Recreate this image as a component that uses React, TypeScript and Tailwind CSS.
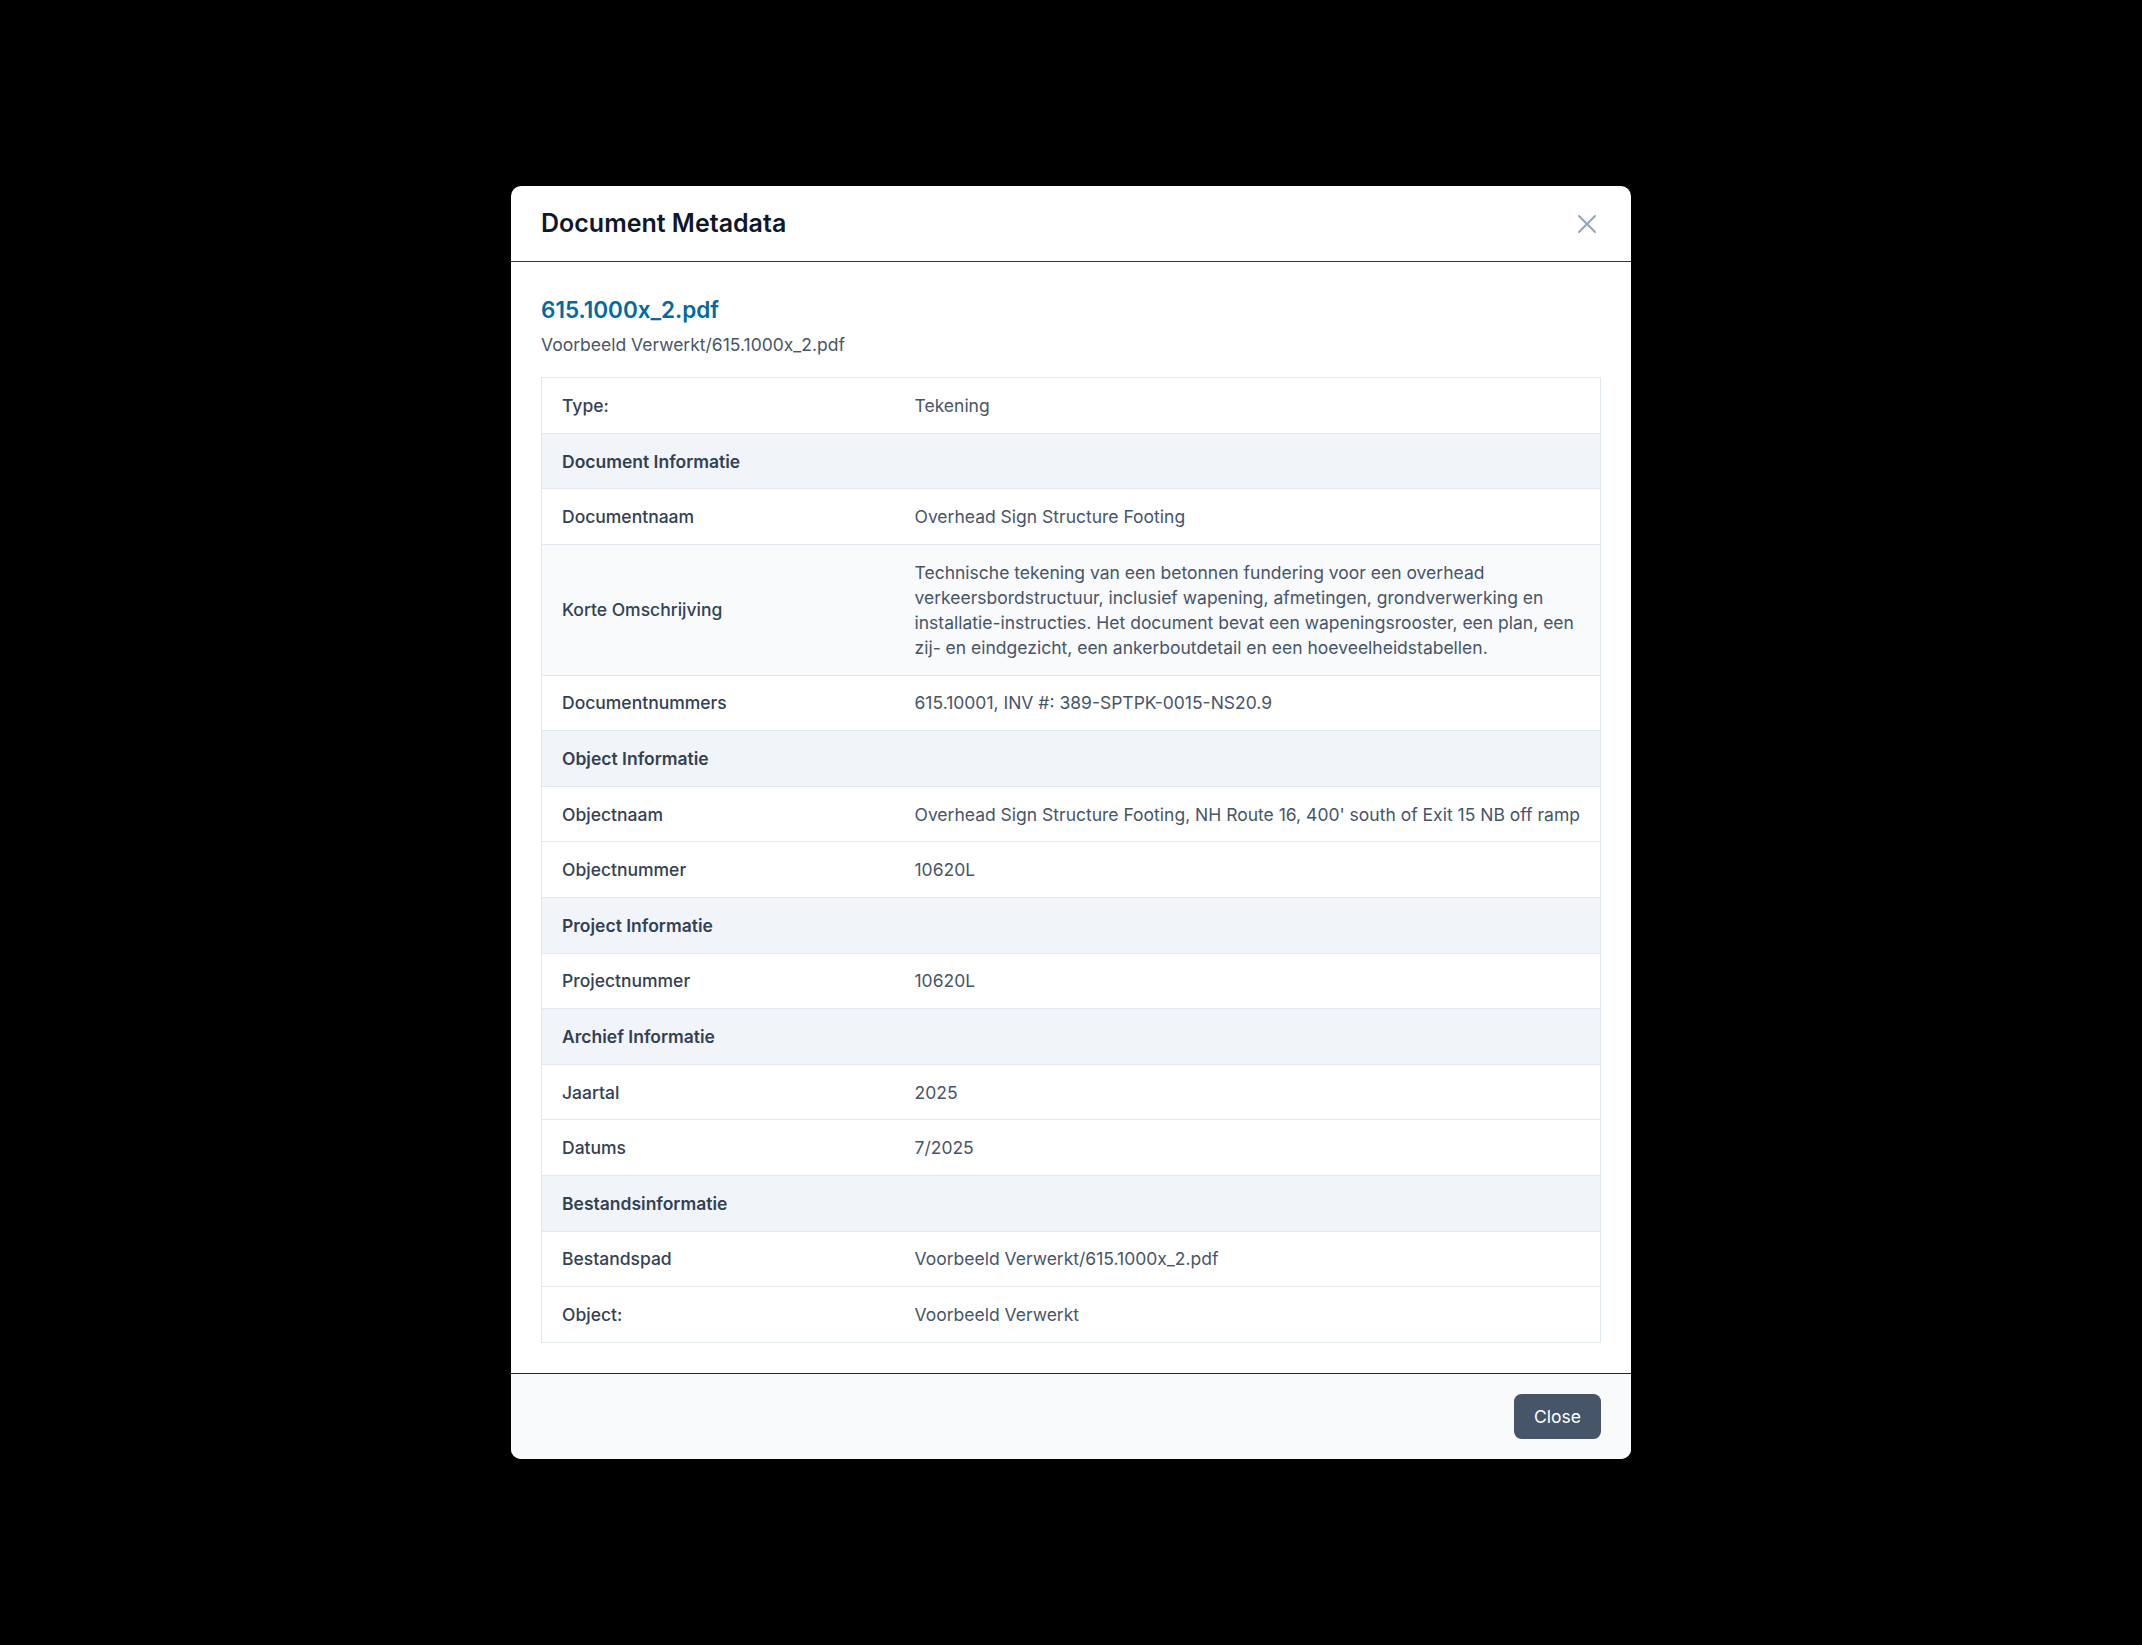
import React from "react";

type Row =
  | { kind: "section"; label: string }
  | { kind: "field"; label: string; value: string; shaded?: boolean };

const ROWS: Row[] = [
  { kind: "field", label: "Type:", value: "Tekening" },
  { kind: "section", label: "Document Informatie" },
  { kind: "field", label: "Documentnaam", value: "Overhead Sign Structure Footing" },
  {
    kind: "field",
    label: "Korte Omschrijving",
    value:
      "Technische tekening van een betonnen fundering voor een overhead verkeersbordstructuur, inclusief wapening, afmetingen, grondverwerking en installatie-instructies. Het document bevat een wapeningsrooster, een plan, een zij- en eindgezicht, een ankerboutdetail en een hoeveelheidstabellen.",
    shaded: true,
  },
  { kind: "field", label: "Documentnummers", value: "615.10001, INV #: 389-SPTPK-0015-NS20.9" },
  { kind: "section", label: "Object Informatie" },
  {
    kind: "field",
    label: "Objectnaam",
    value: "Overhead Sign Structure Footing, NH Route 16, 400' south of Exit 15 NB off ramp",
  },
  { kind: "field", label: "Objectnummer", value: "10620L" },
  { kind: "section", label: "Project Informatie" },
  { kind: "field", label: "Projectnummer", value: "10620L" },
  { kind: "section", label: "Archief Informatie" },
  { kind: "field", label: "Jaartal", value: "2025" },
  { kind: "field", label: "Datums", value: "7/2025" },
  { kind: "section", label: "Bestandsinformatie" },
  { kind: "field", label: "Bestandspad", value: "Voorbeeld Verwerkt/615.1000x_2.pdf" },
  { kind: "field", label: "Object:", value: "Voorbeeld Verwerkt" },
];

export default function App() {
  return (
    <div
      className="flex h-[1645px] w-full items-center justify-center bg-black"
      style={{ fontFamily: "Inter, 'Liberation Sans', sans-serif" }}
    >
      <div className="flex w-[1120px] flex-col overflow-hidden rounded-[10px] bg-white">
        {/* Header */}
        <div className="flex h-[76px] items-center justify-between border-b border-[#2d3748] px-[30px]">
          <h2 className="text-[25px] leading-[35px] font-semibold text-[#0f172a]">
            Document Metadata
          </h2>
          <button className="mr-[-1px] flex h-[30px] w-[30px] items-center justify-center text-[#94a3b8]">
            <svg width="20" height="20" viewBox="0 0 20 20" fill="none" stroke="currentColor" strokeWidth="2" strokeLinecap="round">
              <path d="M2 2 L18 18 M18 2 L2 18" />
            </svg>
          </button>
        </div>

        {/* Body */}
        <div className="p-[30px]">
          <div className="text-[22.5px] leading-[35px] font-semibold text-[#0369a1]">
            615.1000x_2.pdf
          </div>
          <div className="mt-[5px] text-[17.5px] leading-[25px] text-[#475569]">
            Voorbeeld Verwerkt/615.1000x_2.pdf
          </div>

          <table className="mt-[20px] w-full border-collapse border border-[#e2e8f0] text-[17.5px] leading-[25px]">
            <tbody>
              {ROWS.map((row, i) =>
                row.kind === "section" ? (
                  <tr key={i} className="border-b border-[#e2e8f0] bg-[#f1f5f9]">
                    <td colSpan={2} className="px-[20px] py-[14.8px] font-semibold text-[#334155]">
                      {row.label}
                    </td>
                  </tr>
                ) : (
                  <tr
                    key={i}
                    className={`border-b border-[#e2e8f0] ${row.shaded ? "bg-[#f8fafc]" : "bg-white"}`}
                  >
                    <td className="w-[373px] px-[20px] py-[14.8px] align-middle font-medium text-[#334155]">
                      {row.label}
                    </td>
                    <td className="py-[14.8px] pr-[20px] align-middle text-[#475569]">{row.value}</td>
                  </tr>
                )
              )}
            </tbody>
          </table>
        </div>

        {/* Footer */}
        <div className="flex justify-end border-t border-[#1e293b] bg-[#f8fafc] px-[30px] py-[20px]">
          <button className="rounded-[7.5px] bg-[#475569] px-[20px] py-[10px] text-[17.5px] leading-[25px] font-normal text-white">
            Close
          </button>
        </div>
      </div>
    </div>
  );
}
